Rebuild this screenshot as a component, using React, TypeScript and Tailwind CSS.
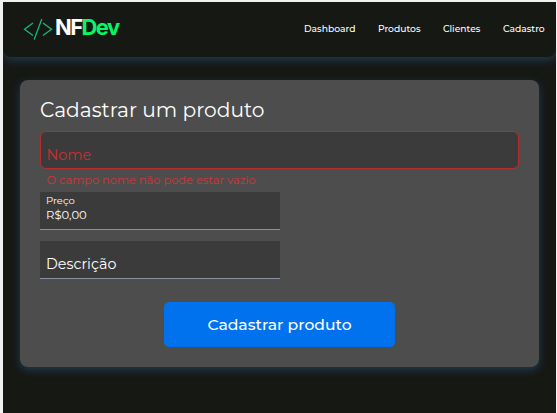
const links = [
  { label: 'Dashboard', box: 'w-[52px] mr-[22px]' },
  { label: 'Produtos', box: 'w-[43px] mr-[22px]' },
  { label: 'Clientes', box: 'w-[38px] mr-[22px]' },
  { label: 'Cadastro', box: 'w-[42px] mr-[11px]' },
];

function Logo() {
  return (
    <a className="ml-[20px] flex h-[22px] items-center">
      <svg className="h-[22px] w-[30px]" viewBox="0 0 30 22" fill="none" stroke="#1bb57c" strokeWidth="1.3">
        <path d="M10 4 1.5 10.3 10 16.5M18.8 0 11.2 20.5M20 4 28.5 10.3 20 16.5" />
      </svg>
      <span className="ml-[2px] -mt-[5px] whitespace-nowrap font-[Inter,sans-serif] text-[22px] leading-[22px] font-bold tracking-[-1.6px] text-white">
        NF<span className="text-[#05f765]">Dev</span>
      </span>
    </a>
  );
}

function Header() {
  return (
    <header className="flex h-[55px] items-center justify-between rounded-b-[8px] bg-[#161814] shadow-[0_3px_8px_#233951]">
      <Logo />
      <nav className="flex text-[9.2px] leading-[14px] font-medium text-white">
        {links.map((link) => (
          <a key={link.label} className={`-mt-[1px] whitespace-nowrap ${link.box}`}>
            {link.label}
          </a>
        ))}
      </nav>
    </header>
  );
}

export default function App() {
  return (
    <div className="h-[413px] w-[557px] overflow-hidden bg-[#f0f2f1] pt-[2px] pr-[1px] pl-[3px] font-[Montserrat,Inter,sans-serif]">
      <div className="h-[411px] overflow-hidden bg-[#161814]">
        <Header />
        <main className="mt-[23px] ml-[17px] h-[287px] w-[519px] rounded-[8px] bg-[#4d4d4d] px-[20px] pt-[17px] shadow-[0_3px_8px_#233951]">
          <h1 className="-mt-px h-[29px] whitespace-nowrap text-[20.2px] leading-[28px] text-white">Cadastrar um produto</h1>
          <div className="mt-[6px] h-[38px] w-[479px] rounded-[6px] border border-[#b82c2e] bg-[#3b3b3b] pt-[13px] pl-[5.5px] text-[14.4px] leading-[20px] text-[#c92f32]">
            Nome
          </div>
          <p className="h-[23px] pt-[2px] pl-[6.5px] text-[11.4px] leading-[18px] text-[#d0363c]">
            O campo nome não pode estar vazio
          </p>
          <div className="h-[38px] w-[240px] border-b border-[#8792a0] bg-[#3b3b3b] pt-[2px] pl-[6px] text-white">
            <div className="text-[10px] leading-[14px]">Preço</div>
            <div className="text-[11.6px] leading-[14px]">R$0,00</div>
          </div>
          <div className="mt-[11px] h-[38px] w-[240px] border-b border-[#8792a0] bg-[#3b3b3b] pt-[13px] pl-[6px] text-[14.3px] leading-[20px] text-white">
            Descrição
          </div>
          <button className="mt-[23px] ml-[124px] flex h-[45px] w-[231px] items-center justify-center rounded-[5px] bg-[#0072ee] text-[15.6px] font-medium text-white">
            Cadastrar produto
          </button>
        </main>
      </div>
    </div>
  );
}
